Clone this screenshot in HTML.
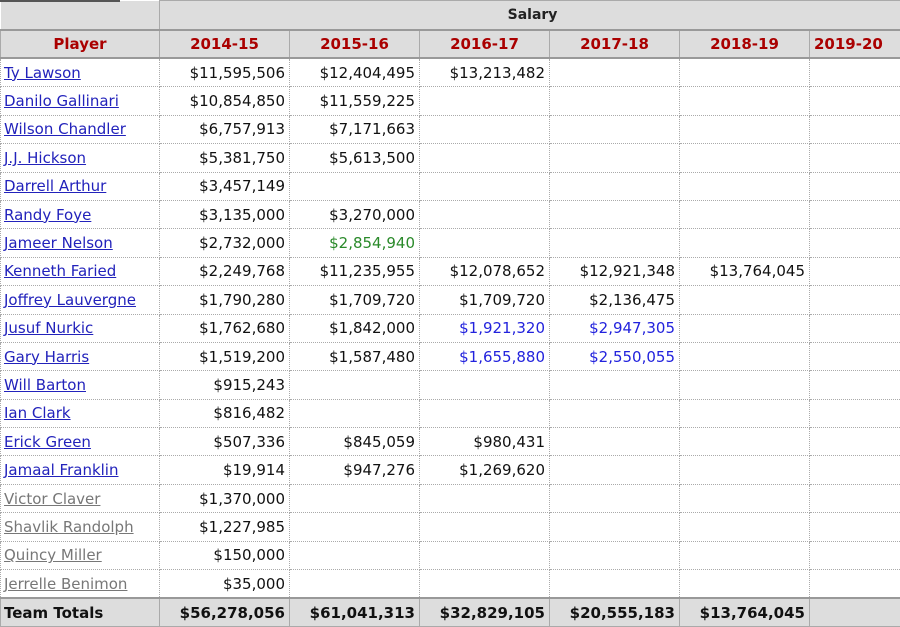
<!DOCTYPE html>
<html><head><style>
body{margin:0;background:#fff;width:900px;height:627px;overflow:hidden;font-family:"DejaVu Sans","Liberation Sans",sans-serif;font-size:15px;}
.bar{position:absolute;left:0;top:0;width:120px;height:2px;background:#555;}
table{position:absolute;left:0;top:0;border-collapse:collapse;table-layout:fixed;width:905px;}
td,th{padding:0 4px;white-space:nowrap;overflow:hidden;}
td{height:27.4px;border:1px dotted #aaa;text-align:right;color:#111;}
td.p{text-align:left;padding-left:3px;}
td.p a{color:#2222bb;text-decoration:underline;}
td.p a.g{color:#777;}
th{background:#ddd;height:28px;border:1px solid #aaa;font-weight:bold;}
tr.h2 th{color:#a00;font-size:15px;border-top:2px solid #999;border-bottom:2px solid #999;height:26px;}
tr.h1 th{font-size:14px;color:#222;}
tr.h1 th.e{border-left:none;border-top:none;}
tr.t td{background:#ddd;font-weight:bold;border:1px solid #aaa;border-top:2px solid #999;height:27px;}
.gr{color:#2a8a2a !important;}
.bl{color:#2222dd !important;}
</style></head><body>
<table>
<colgroup><col style="width:159px"><col style="width:130px"><col style="width:130px"><col style="width:130px"><col style="width:130px"><col style="width:130px"><col style="width:96px"></colgroup>
<tr class="h1"><th class="e"></th><th colspan="6">Salary</th></tr>
<tr class="h2"><th>Player</th><th>2014-15</th><th>2015-16</th><th>2016-17</th><th>2017-18</th><th>2018-19</th><th style="text-align:left">2019-20</th></tr>
<tr><td class="p"><a>Ty Lawson</a></td><td>$11,595,506</td><td>$12,404,495</td><td>$13,213,482</td><td></td><td></td><td></td></tr>
<tr><td class="p"><a>Danilo Gallinari</a></td><td>$10,854,850</td><td>$11,559,225</td><td></td><td></td><td></td><td></td></tr>
<tr><td class="p"><a>Wilson Chandler</a></td><td>$6,757,913</td><td>$7,171,663</td><td></td><td></td><td></td><td></td></tr>
<tr><td class="p"><a>J.J. Hickson</a></td><td>$5,381,750</td><td>$5,613,500</td><td></td><td></td><td></td><td></td></tr>
<tr><td class="p"><a>Darrell Arthur</a></td><td>$3,457,149</td><td></td><td></td><td></td><td></td><td></td></tr>
<tr><td class="p"><a>Randy Foye</a></td><td>$3,135,000</td><td>$3,270,000</td><td></td><td></td><td></td><td></td></tr>
<tr><td class="p"><a>Jameer Nelson</a></td><td>$2,732,000</td><td class="gr">$2,854,940</td><td></td><td></td><td></td><td></td></tr>
<tr><td class="p"><a>Kenneth Faried</a></td><td>$2,249,768</td><td>$11,235,955</td><td>$12,078,652</td><td>$12,921,348</td><td>$13,764,045</td><td></td></tr>
<tr><td class="p"><a>Joffrey Lauvergne</a></td><td>$1,790,280</td><td>$1,709,720</td><td>$1,709,720</td><td>$2,136,475</td><td></td><td></td></tr>
<tr><td class="p"><a>Jusuf Nurkic</a></td><td>$1,762,680</td><td>$1,842,000</td><td class="bl">$1,921,320</td><td class="bl">$2,947,305</td><td></td><td></td></tr>
<tr><td class="p"><a>Gary Harris</a></td><td>$1,519,200</td><td>$1,587,480</td><td class="bl">$1,655,880</td><td class="bl">$2,550,055</td><td></td><td></td></tr>
<tr><td class="p"><a>Will Barton</a></td><td>$915,243</td><td></td><td></td><td></td><td></td><td></td></tr>
<tr><td class="p"><a>Ian Clark</a></td><td>$816,482</td><td></td><td></td><td></td><td></td><td></td></tr>
<tr><td class="p"><a>Erick Green</a></td><td>$507,336</td><td>$845,059</td><td>$980,431</td><td></td><td></td><td></td></tr>
<tr><td class="p"><a>Jamaal Franklin</a></td><td>$19,914</td><td>$947,276</td><td>$1,269,620</td><td></td><td></td><td></td></tr>
<tr><td class="p"><a class="g">Victor Claver</a></td><td>$1,370,000</td><td></td><td></td><td></td><td></td><td></td></tr>
<tr><td class="p"><a class="g">Shavlik Randolph</a></td><td>$1,227,985</td><td></td><td></td><td></td><td></td><td></td></tr>
<tr><td class="p"><a class="g">Quincy Miller</a></td><td>$150,000</td><td></td><td></td><td></td><td></td><td></td></tr>
<tr><td class="p"><a class="g">Jerrelle Benimon</a></td><td>$35,000</td><td></td><td></td><td></td><td></td><td></td></tr>
<tr class="t"><td class="p">Team Totals</td><td>$56,278,056</td><td>$61,041,313</td><td>$32,829,105</td><td>$20,555,183</td><td>$13,764,045</td><td></td></tr>
</table>
<div class="bar"></div>
</body></html>
